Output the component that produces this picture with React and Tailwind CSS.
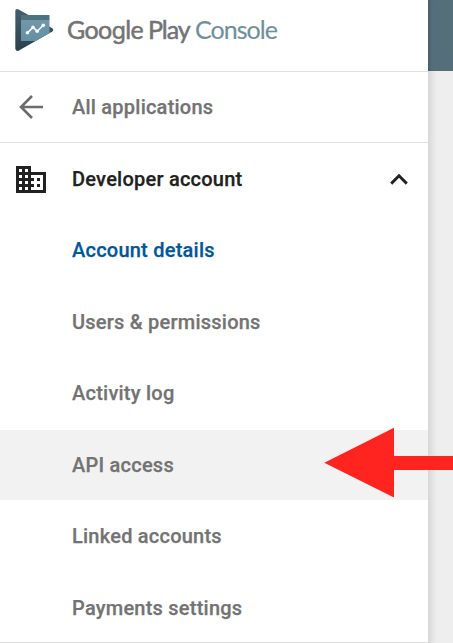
const items = [
  { label: 'Account details', active: true },
  { label: 'Users & permissions' },
  { label: 'Activity log' },
  { label: 'API access', hover: true },
  { label: 'Linked accounts' },
];

function ConsoleLogo() {
  return (
    <svg className="block h-11 w-10 shrink-0" viewBox="14 8 40 44">
      <defs>
        <linearGradient id="play" x1="0" y1="0" x2="0" y2="1">
          <stop offset="0" stopColor="#43616e" />
          <stop offset="1" stopColor="#2d3f49" />
        </linearGradient>
        <linearGradient id="panel" x1="0" y1="0" x2="0" y2="1">
          <stop offset="0" stopColor="#7397a8" />
          <stop offset="1" stopColor="#6290a5" />
        </linearGradient>
      </defs>
      <path d="M15.3 11 Q15.3 8.2 18.2 9.2 L52.3 28.3 Q54.2 30 52.3 31.5 L18.5 50.8 Q15.5 51.5 15.3 48.5Z" fill="url(#play)" />
      <path d="M21 19.5H49.5V33L35.7 41H21Z" fill="url(#panel)" />
      <path d="M21 15H49.5V20H21Z" fill="#4d7181" />
      <path d="M27.4 32.8L33 27.4L37.2 31.2L43.3 25.2" fill="none" stroke="#f4f8fa" strokeWidth="1.6" />
      <g fill="#f4f8fa">
        <circle cx="27.4" cy="32.8" r="1.8" />
        <circle cx="33" cy="27.4" r="1.8" />
        <circle cx="37.2" cy="31.2" r="1.8" />
        <circle cx="43.3" cy="25.2" r="1.8" />
      </g>
    </svg>
  );
}

function Arrow() {
  return (
    <svg className="absolute top-[427px] right-0 h-[72px] w-[130px]" viewBox="323 427 130 72">
      <path d="M324.3 462.7L394 427.8V456H453V470H394V497.6Z" fill="#ff2420" />
    </svg>
  );
}

export default function App() {
  return (
    <div className="relative flex h-[643px] w-[453px] overflow-hidden bg-white font-['Roboto',sans-serif] text-[20px] leading-6 font-medium tracking-[0.23px] text-[#737373] [-webkit-text-stroke:0.25px_currentColor]">
      <aside className="flex w-[428px] shrink-0 flex-col bg-white">
        <header className="flex h-[72px] shrink-0 items-start border-b border-[#e0e0e0] pt-2 pl-3.5">
          <ConsoleLogo />
          <div className="flex pt-1.5 pl-[13px] font-['Lato',sans-serif] text-[25px] leading-[30px] font-normal whitespace-nowrap">
            <span className="w-[81px] tracking-[-0.6px] [-webkit-text-stroke:0.5px_#737373]">
              Goo<span className="font-['Inter',sans-serif] text-[23px]">g</span>le
            </span>
            <span className="w-[47px] tracking-[-1.1px] [-webkit-text-stroke:0.5px_#737373]">Play</span>
            <span className="tracking-[-0.95px] text-[#6f8f9c] [-webkit-text-stroke:0.15px_#6f8f9c]">Console</span>
          </div>
        </header>
        <div className="flex h-[71px] shrink-0 items-center border-b border-[#e0e0e0] pl-[19px]">
          <svg className="h-6 w-6" viewBox="0 0 24 24" fill="none" stroke="#6b6b6b" strokeWidth="2.6">
            <path d="M24 12H2M13 1L2 12L13 23" />
          </svg>
          <span className="pl-[29px]">All applications</span>
        </div>
        <div className="flex h-[72px] shrink-0 items-center pl-4 text-[#212121]">
          <svg className="h-[27px] w-[30px]" viewBox="2 3 20 18" preserveAspectRatio="none" fill="currentColor">
            <path d="M12 7V3H2v18h20V7H12zM6 19H4v-2h2v2zm0-4H4v-2h2v2zm0-4H4V9h2v2zm0-4H4V5h2v2zm4 12H8v-2h2v2zm0-4H8v-2h2v2zm0-4H8V9h2v2zm0-4H8V5h2v2zm10 12h-8v-2h2v-2h-2v-2h2v-2h-2V9h8v10zm-2-8h-2v2h2v-2zm0 4h-2v2h2v-2z" />
          </svg>
          <span className="pl-[26px]">Developer account</span>
          <svg className="mr-5 ml-auto h-[11px] w-[18px]" viewBox="0 0 18 11" fill="none" stroke="currentColor" strokeWidth="2.9">
            <path d="M1.2 9.6L9 1.8L16.8 9.6" />
          </svg>
        </div>
        {items.map((item) => (
          <div key={item.label} className="h-[71.5px] shrink-0 py-[0.75px]">
            <div className={`flex h-[70px] items-center pb-[0.6px] pl-[72px] ${item.hover ? 'bg-[#f2f2f2]' : ''} ${item.active ? 'text-[#01579b] [-webkit-text-stroke:0.25px_#01579b]' : ''}`}>
              {item.label}
            </div>
          </div>
        ))}
        <div className="flex h-[70px] shrink-0 items-center border-b border-[#e0e0e0] pt-px pl-[72px]">Payments settings</div>
      </aside>
      <div className="flex flex-1 flex-col bg-[#eeeeee] shadow-[inset_8px_0_7px_-5px_rgba(0,0,0,0.12)]">
        <div className="h-[71px] bg-[#546e7a] shadow-[inset_4px_0_4px_-3px_rgba(0,0,0,0.2)]" />
      </div>
      <Arrow />
    </div>
  );
}
